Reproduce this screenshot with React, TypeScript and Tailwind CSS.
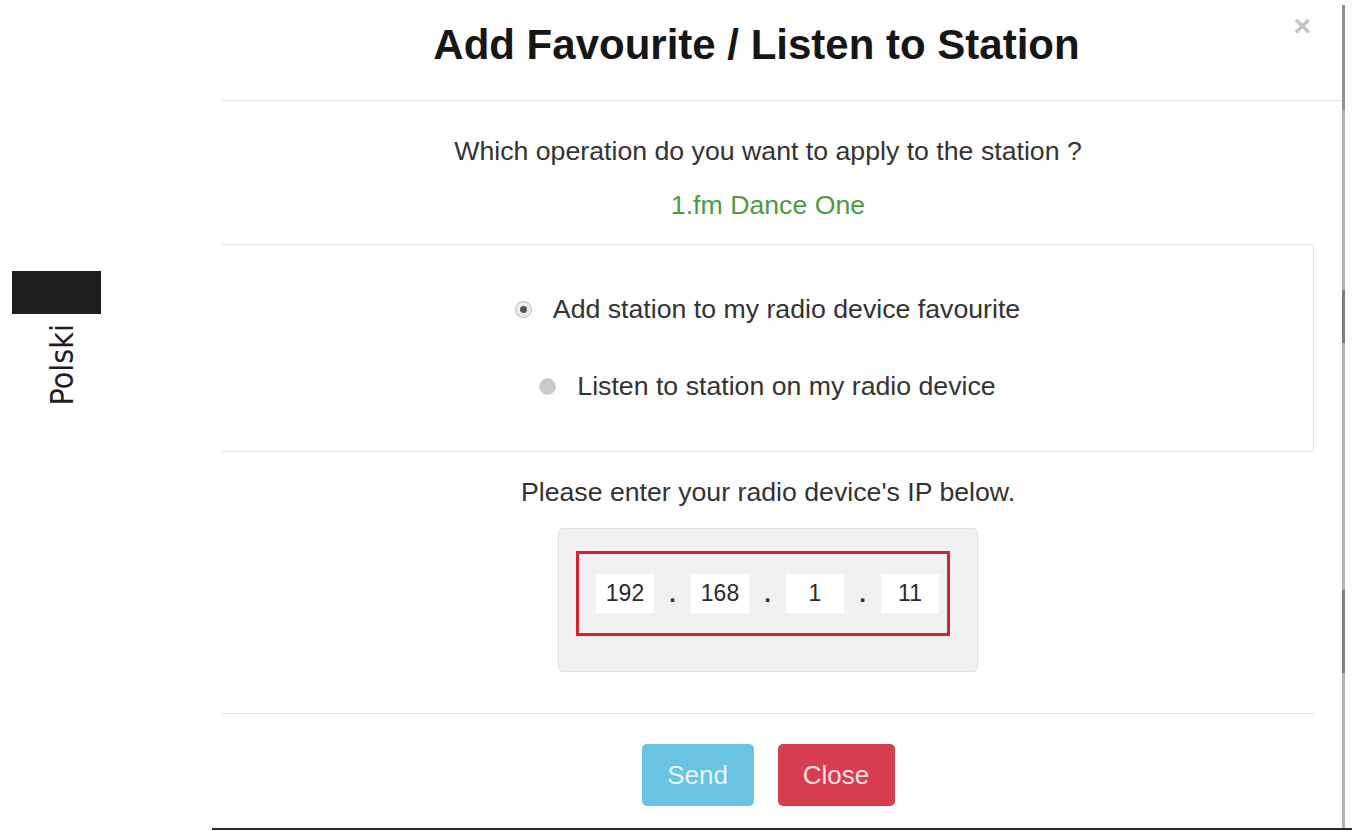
import React from "react";

const Radio = ({ checked }: { checked: boolean }) =>
   checked ? (
      <span className="w-[17px] h-[17px] rounded-full border border-[#b9b9b9] bg-[#ececec] flex items-center justify-center shrink-0">
         <span className="w-[7px] h-[7px] rounded-full bg-[#555]" />
      </span>
   ) : (
      <span className="w-[17px] h-[17px] rounded-full border border-[#d6d6d6] bg-[#c9c9c9] shrink-0" />
   );

const IpField = ({ value }: { value: string }) => (
   <div className="w-[58px] h-[39px] bg-white flex items-center justify-center text-[23px] text-[#2a2a2a] leading-none">
      {value}
   </div>
);

const Dot = () => <span className="w-[37px] text-center text-[24px] text-[#333] font-bold leading-none">.</span>;

const App = () => {
   return (
      <div className="w-[1354px] h-[831px] bg-white overflow-hidden flex flex-col font-['Liberation_Sans',Arial,sans-serif]">
         <div className="flex h-[828px]">
            <aside className="w-[222px] shrink-0 flex flex-col pt-[271px] pl-[12px]">
               <div className="w-[89px] h-[43px] bg-[#1f1d1e]" />
               <div className="mt-[10px] ml-[34px] text-[32px] leading-none text-[#1f1d1e] font-['Liberation_Sans_Narrow','DejaVu_Sans_Condensed',sans-serif] [writing-mode:vertical-rl] rotate-180">
                  Polski
               </div>
            </aside>

            <main className="w-[1120px] shrink-0 flex flex-col">
               <header className="relative h-[101px] border-b border-[#e3e3e3] pt-[24px] pr-[51px] flex justify-center">
                  <h1 className="text-[42px] leading-none font-bold text-[#161616]">Add Favourite / Listen to Station</h1>
                  <span className="absolute right-[31px] top-[11px] text-[30px] font-bold text-[#c4c4c4] leading-none">×</span>
               </header>

               <section className="w-[1092px] flex flex-col items-center text-[26.7px] leading-none text-[#333]">
                  <p className="mt-[37px]">Which operation do you want to apply to the station ?</p>
                  <p className="mt-[27px] text-[#4f9a3c]">1.fm Dance One</p>

                  <div className="mt-[26px] w-full h-[208px] border-y border-r border-[#e3e3e3] rounded-r-[4px] flex flex-col items-center pt-[51px] gap-[50px]">
                     <label className="flex items-center gap-[21px]">
                        <Radio checked />
                        <span>Add station to my radio device favourite</span>
                     </label>
                     <label className="flex items-center gap-[21px]">
                        <Radio checked={false} />
                        <span>Listen to station on my radio device</span>
                     </label>
                  </div>

                  <p className="mt-[27px]">Please enter your radio device's IP below.</p>

                  <div className="mt-[22px] w-[420px] h-[144px] bg-[#f1f1f1] border border-[#e2e2e2] rounded-[5px] pt-[22px] pl-[17px]">
                     <div className="w-[374px] h-[85px] border-[3px] border-[#d3232f] flex items-center pl-[17px]">
                        <IpField value="192" />
                        <Dot />
                        <IpField value="168" />
                        <Dot />
                        <IpField value="1" />
                        <Dot />
                        <IpField value="11" />
                     </div>
                  </div>

                  <div className="mt-[41px] w-full h-px bg-[#e3e3e3]" />

                  <div className="mt-[30px] flex gap-[24px]">
                     <button className="w-[112px] h-[62px] rounded-[5px] bg-[#69c3e2] text-[#e8f6fb] text-[26px]">Send</button>
                     <button className="w-[117px] h-[62px] rounded-[5px] bg-[#d63d4e] text-[#fbe0e3] text-[26px]">Close</button>
                  </div>
               </section>
            </main>

            <div className="w-[3px] shrink-0 flex flex-col pt-[5px]">
               <div className="h-[105px] bg-[#8f8f8f]" />
               <div className="h-[180px] bg-[#b3b3b3]" />
               <div className="h-[53px] bg-[#7c7c7c]" />
               <div className="h-[247px] bg-[#b3b3b3]" />
               <div className="h-[83px] bg-[#828282]" />
               <div className="flex-1 bg-[#b3b3b3]" />
            </div>
         </div>
         <div className="ml-[212px] w-[1140px] h-[2px] bg-[#2b2b2b]" />
      </div>
   );
};

export default App;
